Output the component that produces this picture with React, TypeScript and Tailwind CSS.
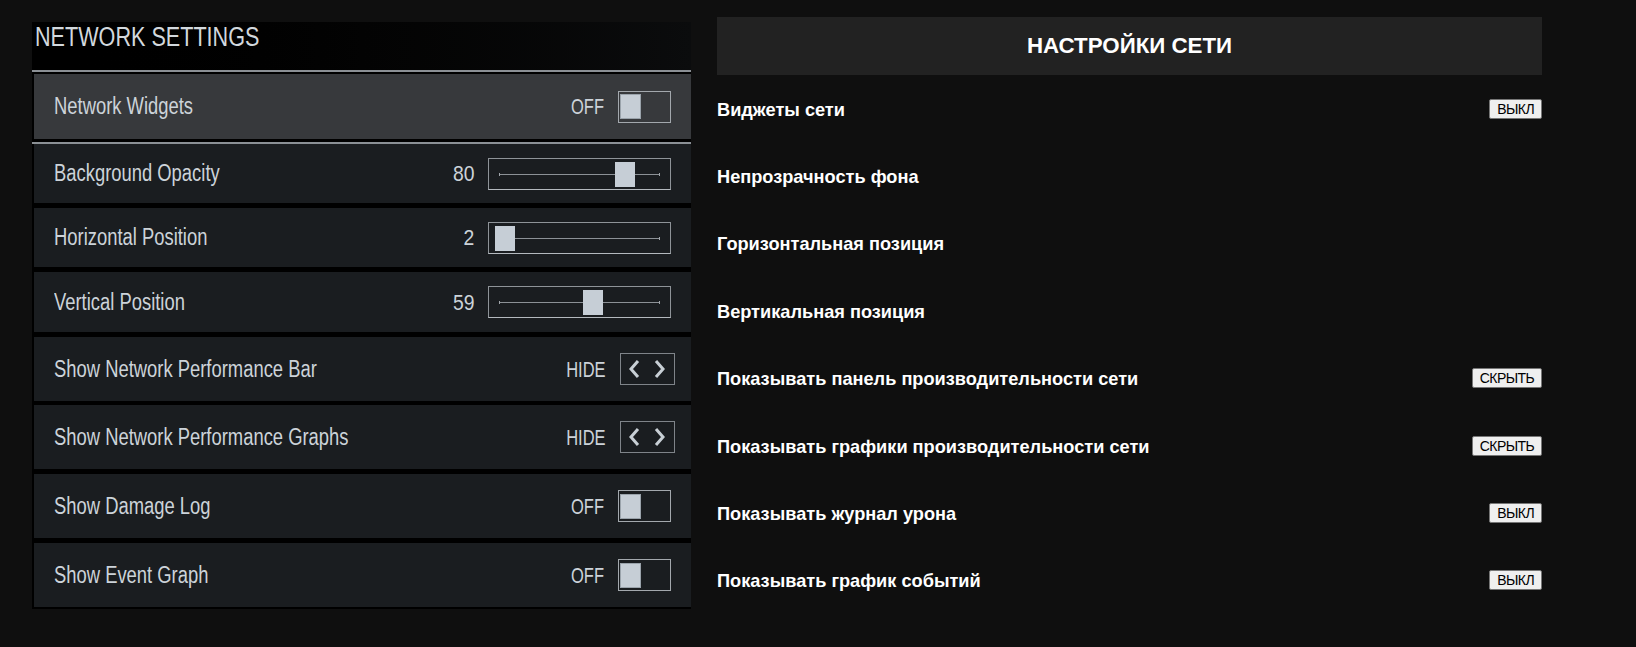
import React from "react";

type Kind = "toggle" | "slider" | "select";

type Setting = {
  label: string;
  kind: Kind;
  value: string;
  num?: number;
  ru: string;
  ruValue?: string;
};

const settings: Setting[] = [
  { label: "Network Widgets", kind: "toggle", value: "OFF", ru: "Виджеты сети", ruValue: "ВЫКЛ" },
  { label: "Background Opacity", kind: "slider", value: "80", num: 80, ru: "Непрозрачность фона" },
  { label: "Horizontal Position", kind: "slider", value: "2", num: 2, ru: "Горизонтальная позиция" },
  { label: "Vertical Position", kind: "slider", value: "59", num: 59, ru: "Вертикальная позиция" },
  { label: "Show Network Performance Bar", kind: "select", value: "HIDE", ru: "Показывать панель производительности сети", ruValue: "СКРЫТЬ" },
  { label: "Show Network Performance Graphs", kind: "select", value: "HIDE", ru: "Показывать графики производительности сети", ruValue: "СКРЫТЬ" },
  { label: "Show Damage Log", kind: "toggle", value: "OFF", ru: "Показывать журнал урона", ruValue: "ВЫКЛ" },
  { label: "Show Event Graph", kind: "toggle", value: "OFF", ru: "Показывать график событий", ruValue: "ВЫКЛ" },
];

// row heights / top gaps measured off the game panel
const rowClass = [
  "h-[65px] bg-[#37393c]",
  "h-[59px] bg-[#1a1d20]",
  "mt-[5px] h-[59px] bg-[#1a1d20]",
  "mt-[5px] h-[60px] bg-[#1a1d20]",
  "mt-[5px] h-[64px] bg-[#1a1d20]",
  "mt-[4px] h-[64px] bg-[#1a1d20]",
  "mt-[5px] h-[64px] bg-[#1a1d20]",
  "mt-[5px] h-[64px] bg-[#1a1d20]",
];

// no condensed face installed, so squeeze Liberation Sans
const game = "inline-block whitespace-nowrap font-['Liberation_Sans',Arial,sans-serif]";

function Toggle() {
  return (
    <div className="flex h-[32px] w-[53px] items-center border-[1.5px] border-[#a3a8ad] pl-[1px]">
      <div className="h-[25px] w-[21px] border border-[#9aa3ab] bg-[#c6ced6]" />
    </div>
  );
}

function Slider({ num }: { num: number }) {
  return (
    <div className="relative h-[32px] w-[183px] border border-[#8e9398] border-b-[#b4b9be]">
      <div className="absolute left-[10px] right-[10px] top-[15px] h-px bg-[#8c9196]" />
      <div className="absolute left-[10px] top-[14px] h-[3px] w-px bg-[#a0a5aa]" />
      <div className="absolute right-[10px] top-[14px] h-[3px] w-px bg-[#a0a5aa]" />
      <div
        className="absolute top-[3px] h-[25px] w-[20px] bg-[#c6ced6]"
        style={{ left: 3 + num * 1.54 }}
      />
    </div>
  );
}

function Arrows() {
  return (
    <div className="h-[32px] w-[55px] border border-[#7f8489]">
      <svg width="53" height="30" viewBox="0 0 53 30" fill="none">
        <polyline points="17,7 10,15 17,23" stroke="#c8cfd5" strokeWidth="3" />
        <polyline points="35,7 42,15 35,23" stroke="#c8cfd5" strokeWidth="3" />
      </svg>
    </div>
  );
}

function GamePanel() {
  return (
    <div className="ml-[32px] mt-[22px] flex w-[659px] flex-col bg-black">
      <div className="h-[48px] bg-gradient-to-r from-black via-[#030303] to-[#0b0c0d] pl-[3px]">
        <h1 className={`${game} origin-left scale-x-[0.8] text-[27px] leading-[30px] text-[#d2d8dd]`}>
          NETWORK SETTINGS
        </h1>
      </div>
      <div className="h-[2px] bg-[#8b9095]" />
      <div className="flex flex-col pb-[2px] pl-[2px] pt-[2px]">
        {settings.map((s, i) => (
          <React.Fragment key={s.label}>
            <div
              className={`flex items-center justify-between pl-[20px] ${rowClass[i]} ${
                s.kind === "select" ? "pr-[16px]" : "pr-[20px]"
              }`}
            >
              <span className={`${game} origin-left scale-x-[0.8] text-[23px] text-[#ccd3d9]`}>
                {s.label}
              </span>
              <div className="flex items-center gap-[14px]">
                <span
                  className={`${game} origin-right text-[22px] text-[#ccd3d9] ${
                    s.kind === "slider" ? "scale-x-[0.88]" : "scale-x-[0.75]"
                  }`}
                >
                  {s.value}
                </span>
                {s.kind === "toggle" && <Toggle />}
                {s.kind === "slider" && <Slider num={s.num ?? 0} />}
                {s.kind === "select" && <Arrows />}
              </div>
            </div>
            {i === 0 && <div className="-ml-[2px] mt-[3px] h-[2px] bg-[#8b9095]" />}
          </React.Fragment>
        ))}
      </div>
    </div>
  );
}

function HtmlPanel() {
  return (
    <div className="ml-[26px] mt-[17px] w-[825px] font-['Liberation_Sans',Arial,sans-serif]">
      <div className="flex h-[58px] items-center justify-center bg-[#222222]">
        <h2 className="text-[22.3px] font-bold text-white">НАСТРОЙКИ СЕТИ</h2>
      </div>
      {settings.map((s) => (
        <div key={s.ru} className="flex h-[67.4px] items-center justify-between">
          <span className="mt-[3px] text-[18.2px] font-bold text-white">{s.ru}</span>
          {s.ruValue && (
            <button className="h-[20px] rounded-[2px] border border-[#767676] bg-[#efefef] px-[7px] text-[14px] leading-none tracking-[-0.6px] text-black">
              {s.ruValue}
            </button>
          )}
        </div>
      ))}
    </div>
  );
}

export default function App() {
  return (
    <div className="flex min-h-[647px] w-full items-start bg-[#0f0f0f]">
      <GamePanel />
      <HtmlPanel />
    </div>
  );
}
